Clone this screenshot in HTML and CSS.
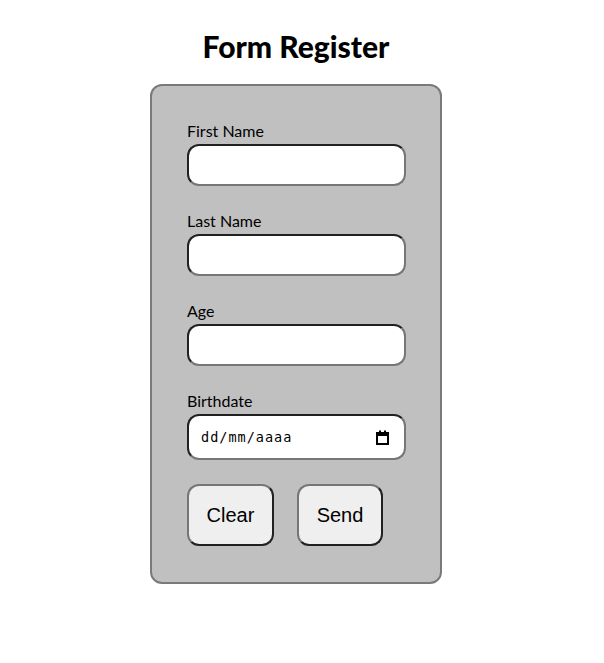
FILE: index.html
```html
<!DOCTYPE html>
<html lang="pt">
<head>
<meta charset="utf-8">
<title>Form Register</title>
<link rel="stylesheet" href="styles.css">
</head>
<body>
<h1 class="title">Form Register</h1>
<form class="card">
  <label class="label" for="fn">First Name</label>
  <input class="field" id="fn" type="text">
  <label class="label" for="ln">Last Name</label>
  <input class="field" id="ln" type="text">
  <label class="label" for="age">Age</label>
  <input class="field" id="age" type="text">
  <label class="label" for="bd">Birthdate</label>
  <div class="field date" id="bd">
    <span class="date-text">dd/mm/aaaa</span>
    <svg class="cal" width="13" height="15" viewBox="0 0 13 15"><rect x="1" y="3" width="11" height="11" fill="none" stroke="#000" stroke-width="2"/><rect x="1" y="3" width="11" height="3" fill="#000"/><rect x="3" y="0.5" width="2" height="3" fill="#000"/><rect x="8" y="0.5" width="2" height="3" fill="#000"/></svg>
  </div>
  <div class="actions">
    <button type="reset" class="btn">Clear</button>
    <button type="button" class="btn">Send</button>
  </div>
</form>
</body>
</html>
```
FILE: styles.css
```css
body {
  margin: 0;
  padding-top: 30px;
  font-family: "Gill Sans", Lato, "Open Sans", sans-serif;
  color: #000;
  background: #fff;
  display: flex;
  flex-direction: column;
  align-items: center;
}
.title {
  font-size: 30px;
  font-weight: 900;
  margin: 0 0 22px 0;
  line-height: 32px;
  padding-right: 12px;
}
.card {
  width: 219px;
  padding: 35px 34px 36px 35px;
  background: #c0c0c0;
  border: 2px solid #7a7a7a;
  border-radius: 12px;
  display: flex;
  flex-direction: column;
  margin-right: 12px;
}
.label {
  font-size: 16px;
  line-height: 19px;
  margin-bottom: 4px;
}
.field {
  box-sizing: border-box;
  width: 219px;
  height: 42px;
  border: 2px inset #767676;
  border-radius: 12px;
  background: #fff;
  margin: 0 0 25px 0;
  padding: 0 12px;
  font: 16px Arial, sans-serif;
}
.date {
  height: 46px;
  display: flex;
  align-items: center;
  justify-content: space-between;
  margin-bottom: 24px;
  padding: 0 15px 0 12px;
}
.date-text {
  font-family: "DejaVu Sans Mono", monospace;
  font-size: 13.5px;
  letter-spacing: 1px;
}
.cal {
  display: block;
}
.actions {
  display: flex;
  gap: 23px;
}
.btn {
  box-sizing: border-box;
  width: 87px;
  height: 62px;
  background: #efefef;
  border: 2px outset #767676;
  border-radius: 12px;
  font: 20px Arial, "Liberation Sans", sans-serif;
  color: #000;
  padding: 0;
}
.btn + .btn {
  width: 86px;
}
```
